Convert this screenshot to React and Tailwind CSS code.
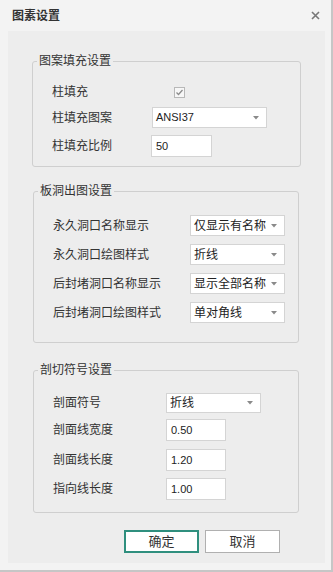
import React from "react";

const font = { fontFamily: '"Liberation Sans", "Noto Sans CJK SC", sans-serif' };

function Arrow() {
  return (
    <svg width="6" height="4" viewBox="0 0 6 4" className="shrink-0">
      <path d="M0 0 L6 0 L3 3.5 Z" fill="#8a8a8a" />
    </svg>
  );
}

function Select({ value, w, h = 21, num }) {
  return (
    <div
      className={`flex items-center justify-between bg-white border border-[#d4d4d4] pl-[3px] pr-[7px] text-[#222] ${num ? "text-[11px]" : "text-[12px]"}`}
      style={{ width: w, height: h }}
    >
      <span className="leading-none whitespace-nowrap">{value}</span>
      <Arrow />
    </div>
  );
}

function Input({ value, w, h = 22 }) {
  return (
    <div
      className="flex items-center bg-white border border-[#d4d4d4] pl-[4px] text-[11px] text-[#222]"
      style={{ width: w, height: h }}
    >
      <span className="leading-none">{value}</span>
    </div>
  );
}

function Label({ children, w }) {
  return (
    <div className="text-[12px] text-[#333] leading-none whitespace-nowrap shrink-0" style={{ width: w }}>
      {children}
    </div>
  );
}

function Group({ title, children, className }) {
  return (
    <fieldset className={`border border-[#cfcfcf] rounded-[3px] px-[4px] ${className}`}>
      <legend className="px-[2px] text-[12px] leading-[16px] text-[#333]">{title}</legend>
      {children}
    </fieldset>
  );
}

export default function App() {
  return (
    <div className="w-[333px] h-[572px] bg-[#f3f3f3] border-r-2 border-b-2 border-[#c6c6c6] flex flex-col" style={font}>
      <div className="h-[31px] shrink-0 flex items-center justify-between pl-[12px] pr-[11px]">
        <span className="text-[12px] font-bold text-[#333] leading-none">图素设置</span>
        <svg width="9" height="9" viewBox="0 0 9 9">
          <path d="M1 1 L8 8 M8 1 L1 8" stroke="#777" strokeWidth="1.6" />
        </svg>
      </div>
      <div className="mx-[8px] w-[317px] h-[532px] bg-[#ededed] flex flex-col">
        <Group title="图案填充设置" className="mt-[22px] ml-[24px] w-[269px]">
          <div className="pl-[15px] pt-[12px] pb-[9px] flex flex-col">
            <div className="flex items-center h-[22px]">
              <Label w={99}>柱填充</Label>
              <div className="ml-[23px] w-[11px] h-[11px] border border-[#b8b8b8] bg-[#f7f7f7] flex items-center justify-center">
                <svg width="9" height="9" viewBox="0 0 9 9">
                  <path d="M1.5 4.5 L3.5 6.5 L7.5 2" stroke="#8c8c8c" strokeWidth="1.3" fill="none" />
                </svg>
              </div>
            </div>
            <div className="flex items-center h-[21px] mt-[4px]">
              <Label w={99}>柱填充图案</Label>
              <div className="ml-[1px]">
                <Select value="ANSI37" w={115} num />
              </div>
            </div>
            <div className="flex items-center h-[22px] mt-[7px]">
              <Label w={99}>柱填充比例</Label>
              <Input value="50" w={61} />
            </div>
          </div>
        </Group>

        <Group title="板洞出图设置" className="mt-[16px] ml-[25px] w-[266px]">
          <div className="pl-[15px] pt-[16px] pb-[19px] flex flex-col gap-[8px]">
            {[
              ["永久洞口名称显示", "仅显示有名称"],
              ["永久洞口绘图样式", "折线"],
              ["后封堵洞口名称显示", "显示全部名称"],
              ["后封堵洞口绘图样式", "单对角线"],
            ].map(([l, v]) => (
              <div key={l} className="flex items-center h-[21px]">
                <Label w={137}>{l}</Label>
                <Select value={v} w={95} />
              </div>
            ))}
          </div>
        </Group>

        <Group title="剖切符号设置" className="mt-[19px] ml-[25px] w-[266px]">
          <div className="pl-[15px] pt-[15px] pb-[12px] flex flex-col">
            <div className="flex items-center h-[20px]">
              <Label w={113}>剖面符号</Label>
              <Select value="折线" w={95} h={20} />
            </div>
            <div className="flex items-center h-[22px] mt-[6px]">
              <Label w={113}>剖面线宽度</Label>
              <Input value="0.50" w={60} />
            </div>
            <div className="flex items-center h-[22px] mt-[8px]">
              <Label w={113}>剖面线长度</Label>
              <Input value="1.20" w={60} />
            </div>
            <div className="flex items-center h-[22px] mt-[7px]">
              <Label w={113}>指向线长度</Label>
              <Input value="1.00" w={60} />
            </div>
          </div>
        </Group>

        <div className="mt-[17px] ml-[116px] flex gap-[6px]">
          <button className="w-[75px] h-[23px] bg-white border-2 border-[#2f8f7e] text-[13px] text-[#333] leading-none flex items-center justify-center">
            确定
          </button>
          <button className="w-[75px] h-[23px] bg-white border border-[#b0b0b0] text-[13px] text-[#333] leading-none flex items-center justify-center">
            取消
          </button>
        </div>
      </div>
    </div>
  );
}
